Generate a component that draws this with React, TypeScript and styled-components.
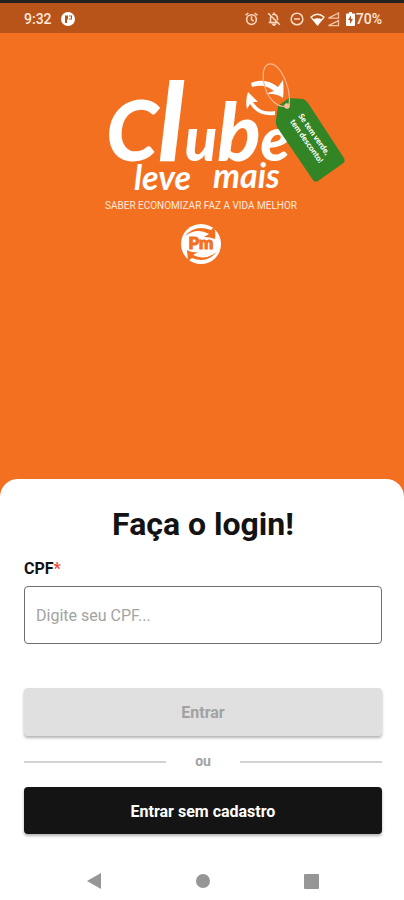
import React from "react";
import styled, { createGlobalStyle } from "styled-components";

const Global = createGlobalStyle`
  * { box-sizing: border-box; }
  body { margin: 0; background: #f47021; font-family: Roboto, "Noto Sans", sans-serif; color: #131313; }
`;

const Screen = styled.div`
  min-height: 100vh;
  display: flex;
  flex-direction: column;
  background: #f47021;
`;

const StatusBar = styled.header`
  display: flex;
  align-items: center;
  justify-content: space-between;
  height: 33px;
  padding: 2px 22px 0 24px;
  border-top: 3px solid #222320;
  background: #b8541a;
  color: #ffe9dc;
  font-size: 14px;
  font-weight: 500;
`;

const StatusGroup = styled.div<{ $gap: number }>`
  display: flex;
  align-items: center;
  gap: ${(p) => p.$gap}px;
  svg { display: block; }
`;

const Hero = styled.section`
  flex: 1;
  display: flex;
  flex-direction: column;
  align-items: center;
  padding-top: 23px;
`;

const Sheet = styled.main`
  background: #fff;
  border-radius: 18px 18px 0 0;
  padding: 27px 22px 0 24px;
`;

const Title = styled.h1`
  margin: 0;
  text-align: center;
  font-size: 32px;
  line-height: 36px;
  font-weight: 700;
`;

const Form = styled.form`
  display: flex;
  flex-direction: column;
`;

const Label = styled.label`
  margin-top: 17px;
  font-size: 16px;
  line-height: 20px;
  font-weight: 700;
`;

const Required = styled.span`
  color: #ef4a3c;
`;

const Field = styled.input`
  margin-top: 7px;
  height: 58px;
  padding: 0 11px;
  border: 1px solid #6e6e6e;
  border-radius: 4px;
  background: #fff;
  font: 400 16px/20px Roboto, "Noto Sans", sans-serif;
  color: #131313;
  &::placeholder { color: #a3a3a3; opacity: 1; }
`;

const Button = styled.button<{ $muted?: boolean }>`
  width: 100%;
  height: ${(p) => (p.$muted ? 48 : 47)}px;
  margin-top: ${(p) => (p.$muted ? 44 : 16)}px;
  padding: 2px 0 0;
  border: 0;
  border-radius: 4px;
  background: ${(p) => (p.$muted ? "#e0e0e0" : "#141414")};
  color: ${(p) => (p.$muted ? "#a2a2a2" : "#fff")};
  font: 700 16px/20px Roboto, "Noto Sans", sans-serif;
  box-shadow: 0 2px 3px rgba(0, 0, 0, 0.3);
`;

const Divider = styled.div`
  display: grid;
  grid-template-columns: 1fr 74px 1fr;
  align-items: center;
  margin-top: 16px;
  text-align: center;
  font-size: 14px;
  line-height: 19px;
  font-weight: 700;
  color: #a2a2a2;
`;

const Rule = styled.span`
  height: 2px;
  background: #d2d4d4;
`;

const NavBar = styled.nav`
  display: grid;
  grid-template-columns: repeat(3, 1fr);
  justify-items: center;
  align-items: center;
  height: 66px;
  padding: 28px 16px 0;
`;

const NavButton = styled.button`
  display: block;
  padding: 0;
  border: 0;
  background: none;
  svg { display: block; }
`;

const AlarmIcon = () => (
  <svg width="13" height="14" viewBox="0 0 24 26" fill="none" stroke="#ffd9c2" strokeWidth="2.8">
    <circle cx="12" cy="14" r="9" />
    <path d="M12 8v6l4 3M1 6l5-4M23 6l-5-4" />
  </svg>
);
const BellOffIcon = () => (
  <svg width="14" height="14" viewBox="0 0 24 24" fill="none" stroke="#ffd9c2" strokeWidth="2.6">
    <path d="M2 2l20 20M3 18h15M6 18v-7q0-2 1-4M9 5q3-2 6 0 3 2 3 6v3M12 1v3" />
    <path d="M10 21h4l-2 2Z" />
  </svg>
);
const DndIcon = () => (
  <svg width="14" height="14" viewBox="0 0 24 24" fill="none" stroke="#ffd9c2" strokeWidth="2.6">
    <circle cx="12" cy="12" r="10" />
    <path d="M7 12h10" />
  </svg>
);
const WifiIcon = () => (
  <svg width="15" height="13" viewBox="0 0 15 13">
    <path d="M1 4Q7.500-1.500 14 4L7.500 12Z" fill="none" stroke="#fff0e6" strokeWidth="1.300" />
    <path d="M3 6.500Q7.500 3.800 12 6.500L7.500 12Z" fill="#fff" />
  </svg>
);
const SignalIcon = () => (
  <svg width="13" height="15" viewBox="0 0 13 15" fill="none" stroke="#f5c3a2" strokeWidth="1.300">
    <path d="M1.500 6.200L11.500 1V6.200ZM1.500 13.700L11.500 8.600V13.700Z" />
  </svg>
);
const BatteryIcon = () => (
  <svg width="9" height="14" viewBox="0 0 9 14">
    <path d="M3 0h3v1.500h2q1 0 1 1V13q0 1-1 1H1q-1 0-1-1V2.500q0-1 1-1h2Z" fill="#fff" />
    <path d="M5 3.500L2 8h2v4l3-5H5Z" fill="#b8541a" />
  </svg>
);

const Logo = () => (
  <svg width="288" height="212" viewBox="58 56 288 212" role="img" aria-label="Clube leve mais">
    <g fill="#fff" fontFamily="Lato, sans-serif" fontStyle="italic" fontWeight="900">
      <text x="106" y="161">
        <tspan fontSize="84">C</tspan>
        <tspan fontSize="108">l</tspan>
        <tspan fontSize="60">u</tspan>
        <tspan fontSize="80">b</tspan>
        <tspan fontSize="60">e</tspan>
      </text>
      <text x="134" y="190" fontSize="34" fontWeight="700">leve</text>
      <text x="213" y="188" fontSize="34" fontWeight="700">mais</text>
    </g>
    <path d="M251 83Q265 77 278 87L283 80Q284 89 283 98Q276 93 265 94L274 91Q264 83 252 87Z" fill="#fff" />
    <path d="M247 109Q245 101 248 92L258 102L253 102Q260 114 275 111L275 115Q258 117 250 104Z" fill="#fff" />
    <path d="M289 98L303 99Q306 100 308 103L344 158Q346 162 342 164L318 181Q315 183 313 180L277 127Q275 123 276 120L278 106Z" fill="#328425" />
    <circle cx="287" cy="106" r="2.800" fill="#f7c4a0" />
    <path d="M287 106C267 110 257 72 267 65C278 58 292 87 289 106" fill="none" stroke="#f9b78d" strokeWidth="1.200" />
    <g transform="translate(298 116) rotate(55)" fill="#fff" fontFamily="Lato, sans-serif" fontSize="8" fontWeight="900">
      <text x="0" y="0">Se tem verde,</text>
      <text x="0" y="10">tem desconto!</text>
    </g>
    <text x="201" y="209" textAnchor="middle" fill="#ffe9dc" fontFamily="Roboto, sans-serif" fontSize="10" fontWeight="400">SABER ECONOMIZAR FAZ A VIDA MELHOR</text>
    <circle cx="201" cy="244" r="20" fill="#fff" />
    <path d="M185 236Q195 224 211 230L214 227Q216 232 215 239Q210 237 204 237L209 234Q197 227 185 236Z" fill="#f47021" />
    <path d="M217 252Q206 264 192 258L188 261L187 250Q192 253 198 252L193 255Q205 261 217 252Z" fill="#f47021" />
    <text x="201" y="249" textAnchor="middle" fill="#f47021" stroke="#f47021" strokeWidth="1" fontFamily="Lato, sans-serif" fontSize="17" fontWeight="900">Pm</text>
  </svg>
);

export default function App() {
  return (
    <>
      <Global />
      <Screen>
        <StatusBar>
          <StatusGroup $gap={9}>
            <span>9:32</span>
            <svg width="14" height="14" viewBox="0 0 14 14">
              <circle cx="7" cy="7" r="7" fill="#fff" />
              <path d="M4 3.500h3v4H4ZM8 3.500h3v4H8V6.500h2v-2H8ZM4 7.500h2V11H4Z" fill="#b8541a" />
            </svg>
          </StatusGroup>
          <StatusGroup $gap={6}>
            <StatusGroup $gap={9}>
              <AlarmIcon />
              <BellOffIcon />
              <DndIcon />
            </StatusGroup>
            <StatusGroup $gap={2}>
              <WifiIcon />
              <SignalIcon />
            </StatusGroup>
            <StatusGroup $gap={1}>
              <BatteryIcon />
              <span>70%</span>
            </StatusGroup>
          </StatusGroup>
        </StatusBar>
        <Hero>
          <Logo />
        </Hero>
        <Sheet>
          <Title>Faça o login!</Title>
          <Form onSubmit={(e) => e.preventDefault()}>
            <Label htmlFor="cpf">CPF<Required>*</Required></Label>
            <Field id="cpf" inputMode="numeric" placeholder="Digite seu CPF..." />
            <Button type="submit" $muted disabled>Entrar</Button>
            <Divider><Rule /><span>ou</span><Rule /></Divider>
            <Button type="button">Entrar sem cadastro</Button>
          </Form>
          <NavBar aria-label="Sistema">
            <NavButton type="button" aria-label="Voltar">
              <svg width="16" height="16" viewBox="0 0 16 16"><path d="M1 8L15 0V16Z" fill="#969696" /></svg>
            </NavButton>
            <NavButton type="button" aria-label="Início">
              <svg width="14" height="14" viewBox="0 0 14 14"><circle cx="7" cy="7" r="7" fill="#969696" /></svg>
            </NavButton>
            <NavButton type="button" aria-label="Recentes">
              <svg width="15" height="15" viewBox="0 0 15 15"><rect width="15" height="15" rx="1" fill="#969696" /></svg>
            </NavButton>
          </NavBar>
        </Sheet>
      </Screen>
    </>
  );
}
